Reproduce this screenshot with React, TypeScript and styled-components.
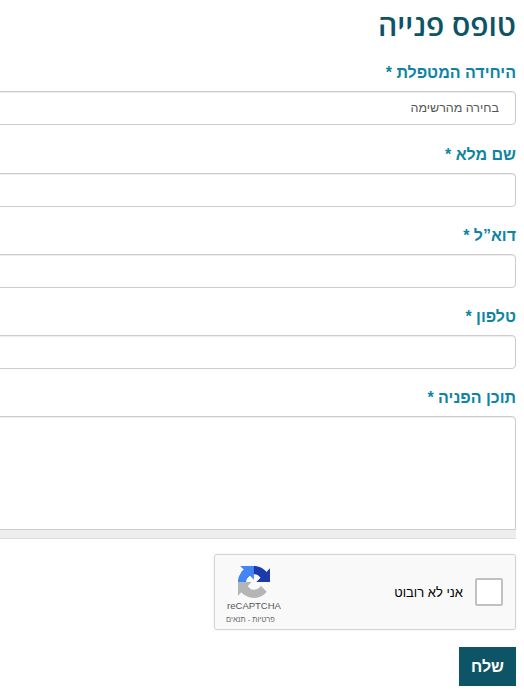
import React from 'react';
import styled, { createGlobalStyle } from 'styled-components';

const Global = createGlobalStyle`
  html, body {
    margin: 0;
    padding: 0;
    background: #fff;
    overflow: hidden;
  }
  body {
    font-family: 'Open Sans', 'Liberation Sans', sans-serif;
  }
`;

const fields = [
  { label: 'שם מלא *' },
  { label: 'דוא”ל *' },
  { label: 'טלפון *' },
];

function App() {
  return (
    <>
      <Global />
      <Page dir='rtl'>
        <Title>טופס פנייה</Title>
        <Form>
          <Field>
            <Label>היחידה המטפלת *</Label>
            <SelectBox>בחירה מהרשימה</SelectBox>
          </Field>
          {fields.map((f) => (
            <Field key={f.label}>
              <Label>{f.label}</Label>
              <Input type='text' />
            </Field>
          ))}
          <Field>
            <Label>תוכן הפניה *</Label>
            <AreaBox />
            <AreaBar />
          </Field>
          <Captcha>
            <CaptchaCheck />
            <CaptchaText>אני לא רובוט</CaptchaText>
            <CaptchaBrand>
              <CaptchaIcon width='32' height='32' viewBox='0 0 64 64'>
                <path fill='#1c3aa9' d='M64 31.955l-.033-1.37V4.687l-7.16 7.16C50.948 4.674 42.033.093 32.05.093c-10.4 0-19.622 4.96-25.458 12.64l11.736 11.86a15.55 15.55 0 0 1 4.754-5.334c2.05-1.6 4.952-2.906 8.968-2.906.485 0 .86.057 1.135.163 4.976.393 9.29 3.14 11.83 7.124l-8.307 8.307c10.52-.04 22.4-.066 27.295.004' />
                <path fill='#4285f4' d='M31.862.094l-1.37.033H4.594l7.16 7.16C4.58 13.147 0 22.06 0 32.046c0 10.4 4.96 19.622 12.64 25.458L24.5 45.768a15.55 15.55 0 0 1-5.334-4.754c-1.6-2.05-2.906-4.952-2.906-8.968 0-.485.057-.86.163-1.135.393-4.976 3.14-9.29 7.124-11.83l8.307 8.307c-.04-10.52-.066-22.4.004-27.295' />
                <path fill='#b5b5b5' d='M.001 32.045l.033 1.37v25.898l7.16-7.16c5.86 7.173 14.774 11.754 24.76 11.754 10.4 0 19.622-4.96 25.458-12.64L45.676 39.4a15.55 15.55 0 0 1-4.754 5.334c-2.05 1.6-4.952 2.906-8.968 2.906-.485 0-.86-.057-1.135-.163-4.976-.393-9.29-3.14-11.83-7.124l8.307-8.307c-10.52.04-22.4.066-27.295-.004' />
              </CaptchaIcon>
              <BrandName>reCAPTCHA</BrandName>
              <BrandLinks>פרטיות - תנאים</BrandLinks>
            </CaptchaBrand>
          </Captcha>
          <Submit type='button'>שלח</Submit>
        </Form>
      </Page>
    </>
  );
}

export default App;

const Page = styled.div`
  width: 540px;
  margin-left: -24px;
  height: 695px;
`;

const Title = styled.h1`
  margin: 0;
  height: 50px;
  line-height: 50px;
  font-size: 30px;
  font-weight: 600;
  color: #0d5466;
`;

const Form = styled.form`
  display: flex;
  flex-direction: column;
`;

const Field = styled.div`
  display: flex;
  flex-direction: column;
  margin-bottom: 6px;
`;

const Label = styled.label`
  height: 27px;
  line-height: 46px;
  margin-bottom: 14px;
  font-family: 'Liberation Sans', sans-serif;
  font-size: 16px;
  font-weight: bold;
  color: #0d85a1;
`;

const SelectBox = styled.div`
  height: 34px;
  margin-bottom: 1px;
  box-sizing: border-box;
  border: 1px solid #ccc;
  border-radius: 4px;
  box-shadow: inset 0 1px 1px rgba(0, 0, 0, 0.075);
  padding: 0 16px;
  line-height: 32px;
  font-family: 'Liberation Sans', sans-serif;
  font-size: 12.5px;
  color: #555;
`;

const Input = styled.input`
  height: 34px;
  box-sizing: border-box;
  border: 1px solid #ccc;
  border-radius: 4px;
  box-shadow: inset 0 1px 1px rgba(0, 0, 0, 0.075);
  background: #fff;
  outline: none;
`;

const AreaBox = styled.div`
  height: 114px;
  box-sizing: border-box;
  border: 1px solid #ccc;
  border-radius: 4px 4px 0 0;
  box-shadow: inset 0 1px 1px rgba(0, 0, 0, 0.075);
  background: #fff;
`;

const AreaBar = styled.div`
  height: 9px;
  box-sizing: border-box;
  background: #eee;
  border-bottom: 1px solid #ddd;
`;

const Captcha = styled.div`
  align-self: flex-start;
  margin-top: 9px;
  width: 302px;
  height: 76px;
  box-sizing: border-box;
  display: flex;
  align-items: center;
  background: #f9f9f9;
  border: 1px solid #d3d3d3;
  border-radius: 3px;
  box-shadow: 0 0 3px rgba(0, 0, 0, 0.08);
  padding: 0 12px;
`;

const CaptchaCheck = styled.div`
  width: 28px;
  height: 28px;
  box-sizing: border-box;
  border: 2px solid #c1c1c1;
  border-radius: 2px;
  background: #fff;
  flex: none;
`;

const CaptchaText = styled.div`
  flex: 1;
  margin-right: 12px;
  font-family: 'Liberation Sans', sans-serif;
  font-size: 13px;
  color: #000;
`;

const CaptchaBrand = styled.div`
  width: 56px;
  margin-left: -1px;
  padding-top: 5px;
  display: flex;
  flex-direction: column;
  align-items: center;
  color: #555;
`;

const CaptchaIcon = styled.svg`
  margin-top: 2px;
`;

const BrandName = styled.div`
  direction: ltr;
  margin-top: 1px;
  font-family: 'Liberation Sans', sans-serif;
  font-size: 9.5px;
  line-height: 13px;
`;

const BrandLinks = styled.div`
  margin-top: 3px;
  align-self: flex-end;
  font-family: 'Liberation Sans', sans-serif;
  font-size: 7.5px;
  line-height: 10px;
  white-space: nowrap;
  color: #666;
`;

const Submit = styled.button`
  align-self: flex-start;
  margin-top: 17px;
  width: 57px;
  height: 39px;
  border: none;
  background: #0d5466;
  color: #fff;
  font-family: 'Liberation Sans', sans-serif;
  font-size: 16px;
  font-weight: bold;
`;
